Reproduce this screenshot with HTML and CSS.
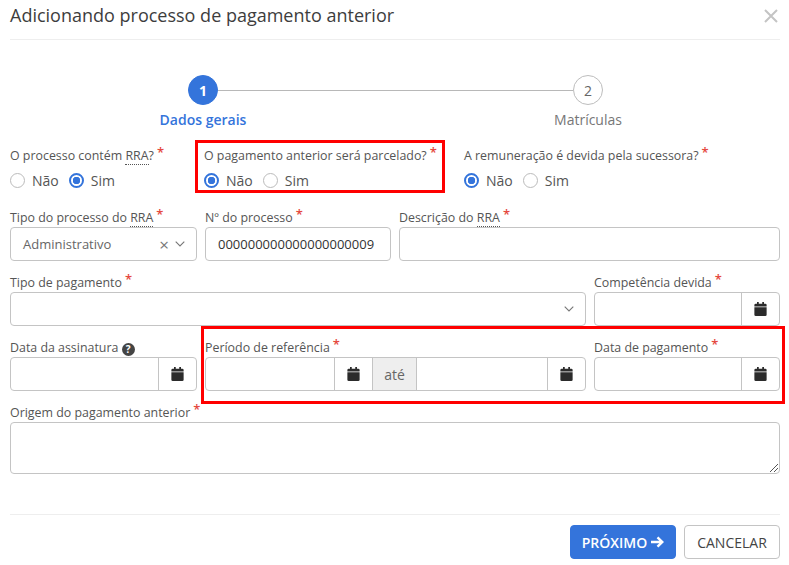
FILE: index.html
```html
<!DOCTYPE html>
<html lang="pt-BR">
<head>
<meta charset="utf-8">
<title>Adicionando processo de pagamento anterior</title>
<link rel="stylesheet" href="styles.css">
</head>
<body>
<svg class="defs" width="0" height="0" aria-hidden="true">
  <symbol id="cal" viewBox="0 0 14 16"><path d="M3 0h2v2h4V0h2v2h1.500A1.500 1.500 0 0 1 14 3.500V5H0V3.500A1.500 1.500 0 0 1 1.500 2H3zM0 6h14v8.500a1.500 1.500 0 0 1-1.500 1.500h-11A1.500 1.500 0 0 1 0 14.500z"/></symbol>
  <symbol id="chev" viewBox="0 0 10 6"><path d="M.7.7 5 5l4.300-4.300" fill="none" stroke="currentColor" stroke-width="1.100"/></symbol>
</svg>
<main class="modal">
  <header class="head">
    <h1>Adicionando processo de pagamento anterior</h1>
    <svg class="close" viewBox="0 0 14 14"><path d="M1 1l12 12M13 1 1 13" stroke="#c4c4c4" stroke-width="2" fill="none"/></svg>
  </header>

  <div class="stepper">
    <div class="step active"><span class="dot">1</span><span class="step-name">Dados gerais</span></div>
    <div class="step-line"></div>
    <div class="step"><span class="dot">2</span><span class="step-name">Matrículas</span></div>
  </div>

  <section class="row row-radio">
    <div class="field">
      <label class="lbl">O processo contém <abbr>RRA</abbr>?<i>*</i></label>
      <div class="radios"><span class="radio"></span><span class="opt">Não</span><span class="radio on"></span><span class="opt">Sim</span></div>
    </div>
    <div class="field">
      <label class="lbl">O pagamento anterior será parcelado?<i>*</i></label>
      <div class="radios"><span class="radio on"></span><span class="opt">Não</span><span class="radio"></span><span class="opt">Sim</span></div>
    </div>
    <div class="field">
      <label class="lbl">A remuneração é devida pela sucessora?<i>*</i></label>
      <div class="radios"><span class="radio on"></span><span class="opt">Não</span><span class="radio"></span><span class="opt">Sim</span></div>
    </div>
    <div class="mark mark-a"></div>
  </section>

  <section class="row row-b">
    <div class="field">
      <label class="lbl">Tipo do processo do <abbr>RRA</abbr><i>*</i></label>
      <div class="box select"><span class="val muted">Administrativo</span><span class="x">×</span><svg class="chev"><use href="#chev"/></svg></div>
    </div>
    <div class="field">
      <label class="lbl">Nº do processo<i>*</i></label>
      <div class="box text"><span class="val">000000000000000000009</span></div>
    </div>
    <div class="field">
      <label class="lbl">Descrição do <abbr>RRA</abbr><i>*</i></label>
      <div class="box"></div>
    </div>
  </section>

  <section class="row row-c">
    <div class="field">
      <label class="lbl">Tipo de pagamento<i>*</i></label>
      <div class="box select"><span class="val"></span><svg class="chev"><use href="#chev"/></svg></div>
    </div>
    <div class="field">
      <label class="lbl">Competência devida<i>*</i></label>
      <div class="box date"><span class="grow"></span><span class="addon"><svg class="cal"><use href="#cal"/></svg></span></div>
    </div>
  </section>

  <section class="row row-d">
    <div class="field">
      <label class="lbl">Data da assinatura <span class="help">?</span></label>
      <div class="box date"><span class="grow"></span><span class="addon"><svg class="cal"><use href="#cal"/></svg></span></div>
    </div>
    <div class="field">
      <label class="lbl">Período de referência<i>*</i></label>
      <div class="box date">
        <span class="grow from"></span><span class="addon"><svg class="cal"><use href="#cal"/></svg></span>
        <span class="ate">até</span>
        <span class="grow"></span><span class="addon"><svg class="cal"><use href="#cal"/></svg></span>
      </div>
    </div>
    <div class="field">
      <label class="lbl">Data de pagamento<i>*</i></label>
      <div class="box date"><span class="grow"></span><span class="addon"><svg class="cal"><use href="#cal"/></svg></span></div>
    </div>
    <div class="mark mark-b"></div>
  </section>

  <section class="row row-e">
    <div class="field">
      <label class="lbl">Origem do pagamento anterior<i>*</i></label>
      <div class="box area">
        <svg class="grip" viewBox="0 0 8 8"><path d="M8 0 0 8M8 4 4 8" stroke="#555" stroke-width="1" fill="none"/></svg>
      </div>
    </div>
  </section>

  <footer class="foot">
    <button class="btn primary">PRÓXIMO<svg class="arrow" viewBox="0 0 14 12"><path d="M1 6h11M7.500 1.300 12.300 6l-4.800 4.700" fill="none" stroke="#fff" stroke-width="2.400"/></svg></button>
    <button class="btn ghost">CANCELAR</button>
  </footer>
</main>
</body>
</html>
```
FILE: styles.css
```css
* { box-sizing: border-box; }
html, body { margin: 0; padding: 0; background: #fff; }
body { width: 789px; height: 565px; overflow: hidden; font-family: "Open Sans", "Noto Sans", sans-serif; color: #555; }
.defs { position: absolute; }
.modal { padding: 0 9px 0 10px; display: flex; flex-direction: column; }

.head { height: 40px; border-bottom: 1px solid #eee; display: flex; justify-content: space-between; align-items: flex-start; }
.head h1 { margin: 3px 0 0; font-size: 18px; line-height: 25px; font-weight: 400; color: #3d3d3d; }
.close { width: 14px; height: 14px; margin: 9px 2px 0 0; }

.stepper { display: flex; align-items: flex-start; margin: 35px 0 0 133px; width: 505px; height: 70px; }
.step { width: 120px; flex: none; display: flex; flex-direction: column; align-items: center; }
.dot { width: 30px; height: 30px; border-radius: 50%; border: 1px solid #bdbdbd; display: flex; align-items: center; justify-content: center; font-size: 14px; color: #666; background: #fff; }
.step-name { font-size: 14px; line-height: 20px; margin-top: 5px; color: #777; white-space: nowrap; }
.step.active .dot { background: #3474db; border-color: #3474db; color: #fff; font-weight: 700; }
.step.active .step-name { color: #3474db; font-weight: 600; }
.step-line { flex: 1; height: 1px; background: #b8b8b8; margin: 15px -45px 0; }

.row { display: grid; column-gap: 8px; position: relative; }
.row-radio { grid-template-columns: 186px 252px 1fr; height: 62px; }
.row-b { grid-template-columns: 187px 186px 1fr; }
.row-c { grid-template-columns: 1fr 186px; margin-top: 11px; }
.row-d { grid-template-columns: 187px 1fr 186px; margin-top: 11px; }
.row-e { grid-template-columns: 1fr; margin-top: 11px; }

.lbl { display: block; height: 20px; font-size: 12.400px; line-height: 21px; color: #555; white-space: nowrap; }
.lbl i { color: #e5483e; font-style: normal; font-size: 13px; font-weight: 600; margin-left: 3px; line-height: 12px; position: relative; top: -3px; }
abbr { text-decoration: none; border-bottom: 1px dotted #555; }
.help { display: inline-flex; width: 13px; height: 13px; border-radius: 50%; background: #444; color: #fff; font-size: 10px; line-height: 13px; font-weight: 700; align-items: center; justify-content: center; vertical-align: -1px; margin-left: 0; }

.radios { display: flex; align-items: center; height: 22px; margin-top: 4px; font-size: 14px; }
.radio { width: 15px; height: 15px; border-radius: 50%; border: 1.500px solid #bbb; background: #fff; flex: none; }
.radio.on { border: 2px solid #3474db; background: radial-gradient(circle, #3474db 0 3.500px, #fff 4px); }
.opt { margin: 0 10px 0 7px; color: #555; }

.box { height: 34px; border: 1px solid #c4c4c4; border-radius: 4px; background: #fff; display: flex; align-items: center; font-size: 13px; overflow: hidden; }
.text .val { padding-left: 12px; color: #333; }
.select { padding: 0 11px 0 12px; }
.select .val { flex: 1; }
.muted { color: #666; }
.x { font-size: 17px; color: #777; margin-right: 6px; line-height: 1; }
.chev { width: 10px; height: 6px; color: #777; }
.grow { flex: 1; align-self: stretch; }
.grow.from { flex: 0 0 128px; }
.addon { width: 38px; flex: none; align-self: stretch; border-left: 1px solid #c4c4c4; display: flex; align-items: center; justify-content: center; }
.cal { width: 13px; height: 14px; fill: #2b2b2b; }
.ate { width: 45px; flex: none; align-self: stretch; background: #eee; border-left: 1px solid #c4c4c4; border-right: 1px solid #c4c4c4; display: flex; align-items: center; justify-content: center; font-size: 14px; color: #666; }
.area { height: 52px; position: relative; }
.grip { position: absolute; right: 1px; bottom: 1px; width: 8px; height: 8px; }

.foot { margin-top: 40px; border-top: 1px solid #eee; padding-top: 10px; display: flex; justify-content: flex-end; gap: 8px; }
.btn { height: 34px; border-radius: 4px; font: 400 14px "Open Sans", "Noto Sans", sans-serif; display: flex; align-items: center; justify-content: center; padding: 0; }
.primary { width: 106px; background: #3474db; border: 1px solid #3474db; color: #fff; font-weight: 600; }
.arrow { width: 14px; height: 12px; margin-left: 3px; }
.ghost { width: 96px; background: #fff; border: 1px solid #c4c4c4; color: #444; }

.mark { position: absolute; border: 3px solid #f00; pointer-events: none; }
.mark-a { left: 185px; top: -5px; width: 250px; height: 53px; }
.mark-b { left: 191px; top: -11px; width: 584px; height: 78px; }
```
